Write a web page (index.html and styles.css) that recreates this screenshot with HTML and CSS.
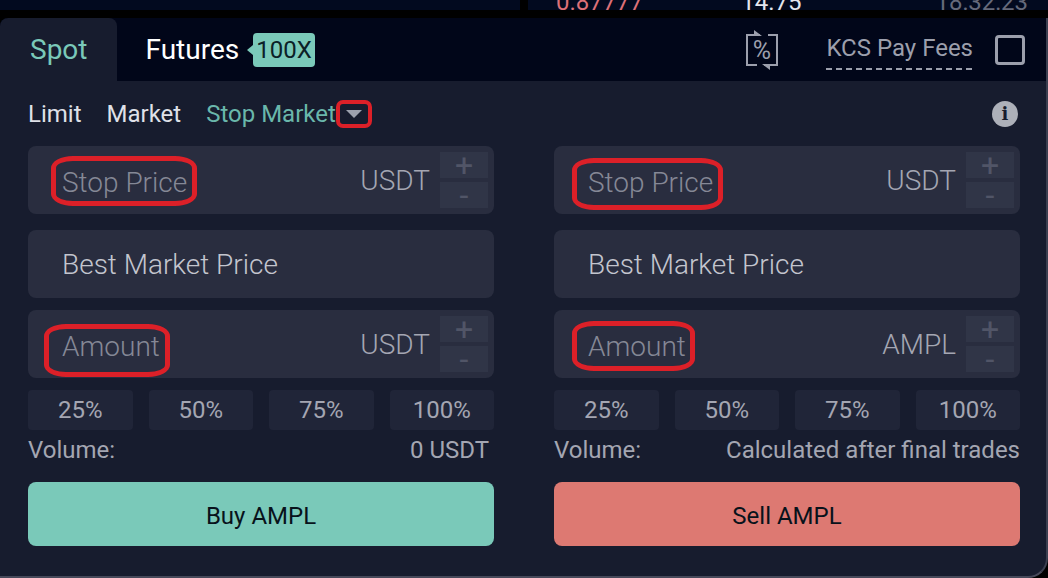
FILE: index.html
```html
<!DOCTYPE html>
<html lang="en">
<head>
    <meta charset="UTF-8">
    <meta name="viewport" content="width=device-width, initial-scale=1.0">
    <title>AMPL/USDT - Trade</title>
    <link rel="stylesheet" href="styles.css">
</head>
<body>
    <div class="market-strip">
        <div class="strip-panel"></div>
        <div class="strip-panel trades">
            <span class="trade-price">0.87777</span>
            <span class="trade-amount">14.75</span>
            <span class="trade-time">18:32:23</span>
        </div>
    </div>

    <main class="order-panel">
        <div class="tab-bar">
            <button class="tab active">Spot</button>
            <button class="tab">Futures <span class="leverage">100X</span></button>
            <div class="fee-options">
                <svg class="fee-icon" width="32" height="40" viewBox="0 0 32 40">
                    <path d="M14 5H1V35H11M22 5H31V35H18" fill="none" stroke="currentColor" stroke-width="2"/>
                    <path d="M8 0L16 6H8ZM16 34H24V40Z" fill="currentColor"/>
                    <text x="16" y="29" text-anchor="middle">%</text>
                </svg>
                <label class="fee-label" for="kcsFees">KCS Pay Fees</label>
                <input class="fee-check" type="checkbox" id="kcsFees">
            </div>
        </div>

        <div class="order-types">
            <button class="type">Limit</button>
            <button class="type">Market</button>
            <button class="type active">Stop Market</button>
            <button class="type-more" aria-label="More order types">
                <svg width="16" height="8" viewBox="0 0 16 8"><path d="M0 0H16L8 8Z" fill="currentColor"/></svg>
            </button>
            <button class="info" aria-label="Order type info">i</button>
        </div>

        <div class="forms">
            <form class="order-form">
                <div class="field">
                    <input type="text" placeholder="Stop Price" aria-label="Stop price to buy">
                    <span class="unit">USDT</span>
                    <div class="stepper">
                        <button type="button">+</button>
                        <button type="button">-</button>
                    </div>
                    <span class="mark mark-buy-stop"></span>
                </div>
                <div class="field market-price">
                    <input type="text" value="Best Market Price" aria-label="Buy price" readonly>
                </div>
                <div class="field">
                    <input type="text" placeholder="Amount" aria-label="Amount to buy">
                    <span class="unit">USDT</span>
                    <div class="stepper">
                        <button type="button">+</button>
                        <button type="button">-</button>
                    </div>
                    <span class="mark mark-buy-amount"></span>
                </div>
                <div class="percents">
                    <button type="button">25%</button>
                    <button type="button">50%</button>
                    <button type="button">75%</button>
                    <button type="button">100%</button>
                </div>
                <div class="volume buy-volume"><span>Volume:</span><span>0 USDT</span></div>
                <button class="submit buy" type="button">Buy AMPL</button>
            </form>

            <form class="order-form">
                <div class="field">
                    <input type="text" placeholder="Stop Price" aria-label="Stop price to sell">
                    <span class="unit">USDT</span>
                    <div class="stepper">
                        <button type="button">+</button>
                        <button type="button">-</button>
                    </div>
                    <span class="mark mark-sell-stop"></span>
                </div>
                <div class="field market-price">
                    <input type="text" value="Best Market Price" aria-label="Sell price" readonly>
                </div>
                <div class="field">
                    <input type="text" placeholder="Amount" aria-label="Amount to sell">
                    <span class="unit">AMPL</span>
                    <div class="stepper">
                        <button type="button">+</button>
                        <button type="button">-</button>
                    </div>
                    <span class="mark mark-sell-amount"></span>
                </div>
                <div class="percents">
                    <button type="button">25%</button>
                    <button type="button">50%</button>
                    <button type="button">75%</button>
                    <button type="button">100%</button>
                </div>
                <div class="volume"><span>Volume:</span><span>Calculated after final trades</span></div>
                <button class="submit sell" type="button">Sell AMPL</button>
            </form>
        </div>
    </main>
</body>
</html>
```
FILE: styles.css
```css
* {
    margin: 0;
    padding: 0;
    box-sizing: border-box;
}

body {
    background-color: #000;
    color: #a4a6b2;
    font-family: Roboto, 'Liberation Sans', sans-serif;
    font-size: 24px;
    line-height: 32px;
}

button,
input {
    font: inherit;
    color: inherit;
    background: none;
    border: none;
}

button {
    cursor: pointer;
}

/* bottom edge of the trade list above the order panel */
.market-strip {
    display: grid;
    grid-template-columns: 1fr 1fr;
    gap: 8px;
    height: 10px;
    margin-bottom: 8px;
}

.strip-panel {
    height: 10px;
    background-color: #020a1f;
    overflow: hidden;
}

.trades {
    display: grid;
    grid-template-columns: 1fr 1fr 1fr;
    align-content: end;
    line-height: 24px;
    padding: 0 20px 0 28px;
}

.trades span {
    margin-bottom: -4px;
}

.trade-price {
    color: #dc7078;
}

.trade-amount {
    color: #e4e6ee;
    padding-left: 28px;
}

.trade-time {
    color: #666a7b;
    text-align: right;
}

.order-panel {
    background-color: #171c2e;
    border-right: 2px solid #3b3f50;
    border-bottom: 2px solid #47495a;
    border-radius: 8px 0 20px 0;
    overflow: hidden;
}

.tab-bar {
    display: flex;
    height: 63px;
    background-color: #010619;
}

.tab {
    display: flex;
    align-items: center;
    padding: 0 28px;
    font-size: 28px;
    color: #fff;
}

.tab.active {
    padding: 0 30px;
    background-color: #171c2e;
    border-radius: 8px 8px 0 0;
    color: #7ac9b9;
}

.leverage {
    position: relative;
    margin-left: 14px;
    padding: 0 3px;
    font-size: 24px;
    line-height: 34px;
    background-color: #7ac9b9;
    border-radius: 4px;
    color: #0b2027;
}

.leverage::before {
    content: '';
    position: absolute;
    left: -6px;
    top: 12px;
    border: 5px solid transparent;
    border-left: none;
    border-right: 6px solid #7ac9b9;
}

.fee-options {
    display: flex;
    align-items: center;
    margin-left: auto;
    padding-right: 21px;
    color: #9c9fac;
}

.fee-icon {
    margin-right: 48px;
}

.fee-icon text {
    font-size: 25px;
    fill: currentColor;
}

.fee-label {
    padding: 2px 0 6px;
    margin-right: 22px;
    background: repeating-linear-gradient(90deg, #9c9fac 0 6px, transparent 6px 10px) bottom / 100% 2px no-repeat;
}

.fee-check {
    appearance: none;
    width: 30px;
    height: 30px;
    border: 3px solid #9c9fac;
    border-radius: 4px;
}

.order-types {
    display: flex;
    align-items: center;
    height: 65px;
    padding: 0 28px;
}

.type {
    margin-right: 25px;
    color: #dfe1e8;
}

.type.active {
    margin-right: 0;
    color: #6ab7ab;
}

.type-more {
    display: flex;
    align-items: center;
    justify-content: center;
    width: 36px;
    height: 28px;
    border: 4px solid #dc2028;
    border-radius: 7px;
    color: #9da1ae;
}

.info {
    width: 26px;
    height: 26px;
    margin-left: auto;
    border-radius: 50%;
    background-color: #adb0b9;
    color: #171c2e;
    font-family: 'DejaVu Serif', serif;
    font-size: 18px;
    font-weight: bold;
    line-height: 26px;
}

.forms {
    display: grid;
    grid-template-columns: repeat(2, minmax(0, 1fr));
    gap: 60px;
    padding: 0 26px 30px 28px;
}

.order-form {
    display: flex;
    flex-direction: column;
    gap: 12px;
}

.field {
    position: relative;
    display: flex;
    align-items: center;
    height: 68px;
    padding-right: 6px;
    background-color: #292d3f;
    border-radius: 8px;
    font-size: 28px;
    font-weight: 300;
}

.field input {
    flex: 1;
    min-width: 0;
    height: 68px;
    padding: 4px 0 0 34px;
    outline: none;
}

.field input::placeholder {
    color: #858896;
    opacity: 1;
}

.market-price {
    margin-top: 4px;
    color: #c3c5ce;
}

.market-price input {
    padding-top: 0;
}

.unit {
    margin-right: 10px;
    padding-top: 2px;
}

.stepper {
    display: grid;
    gap: 4px;
    width: 48px;
}

.stepper button {
    height: 26px;
    background-color: #303547;
    color: #515567;
    font-size: 32px;
    font-weight: 400;
    line-height: 26px;
}

/* red highlight rings around the fields to fill in */
.mark {
    position: absolute;
    border: 5px solid #dc2028;
    border-radius: 22px / 12px;
    pointer-events: none;
}

.mark-buy-stop {
    left: 23px;
    top: 10px;
    width: 146px;
    height: 50px;
}

.mark-buy-amount {
    left: 16px;
    top: 14px;
    width: 126px;
    height: 53px;
}

.mark-sell-stop {
    left: 18px;
    top: 12px;
    width: 151px;
    height: 52px;
}

.mark-sell-amount {
    left: 18px;
    top: 11px;
    width: 123px;
    height: 50px;
}

.percents {
    display: grid;
    grid-template-columns: repeat(4, 1fr);
    gap: 16px;
}

.percents button {
    height: 40px;
    background-color: #202538;
    border-radius: 4px;
}

.volume {
    display: flex;
    justify-content: space-between;
    margin-top: -12px;
    line-height: 40px;
}

.buy-volume {
    padding-right: 5px;
}

.submit {
    height: 64px;
    border-radius: 8px;
    color: #08121b;
    padding-top: 4px;
}

.buy {
    background-color: #7ac9b9;
}

.sell {
    background-color: #dd7972;
}
```
